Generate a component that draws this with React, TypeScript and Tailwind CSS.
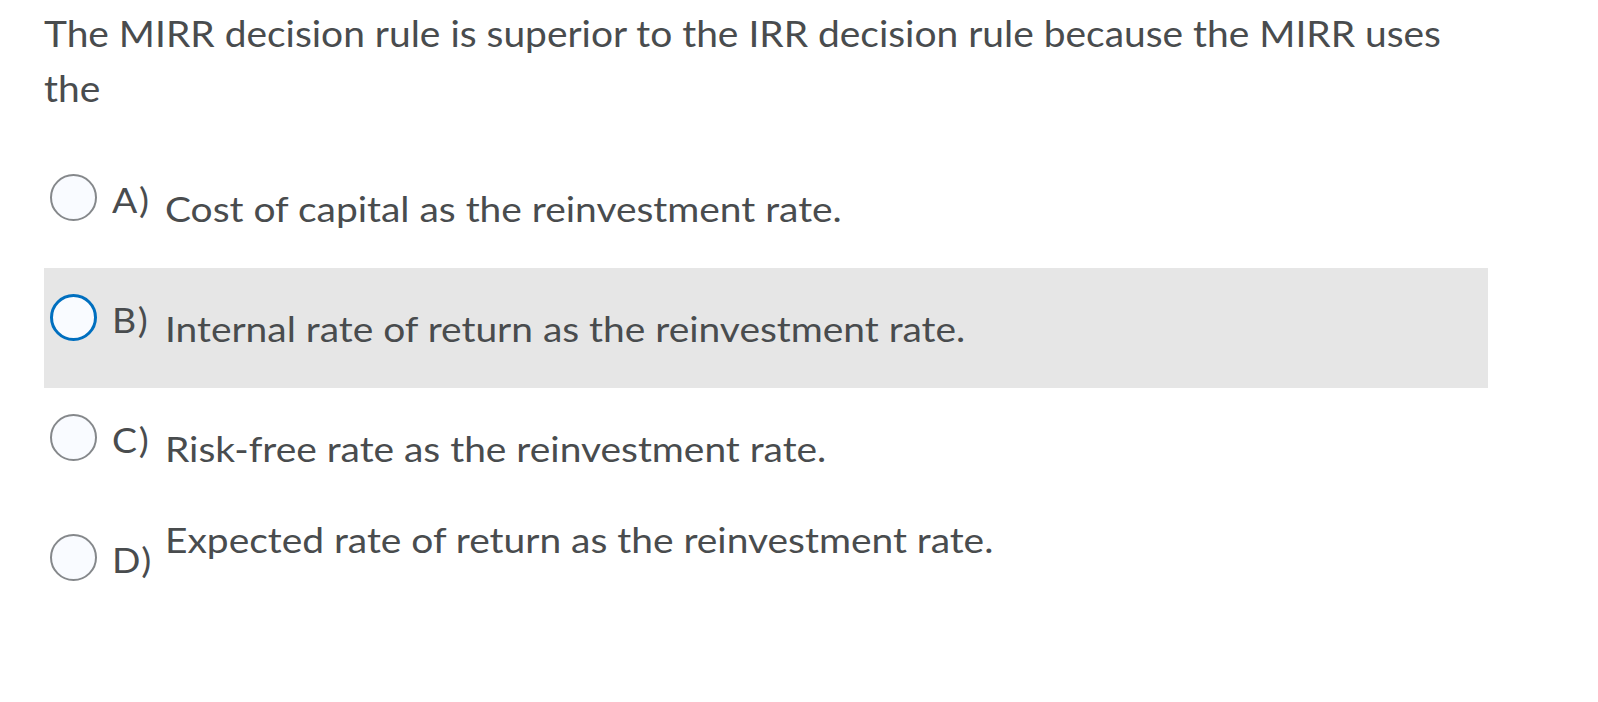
const choices = [
  { key: 'A)', text: 'Cost of capital as the reinvestment rate.', selected: false, textTop: false },
  { key: 'B)', text: 'Internal rate of return as the reinvestment rate.', selected: true, textTop: false },
  { key: 'C)', text: 'Risk-free rate as the reinvestment rate.', selected: false, textTop: false },
  { key: 'D)', text: 'Expected rate of return as the reinvestment rate.', selected: false, textTop: true },
]

function Radio({ selected }: { selected: boolean }) {
  return (
    <span
      className={`mt-[26px] ml-[6px] block h-[47px] w-[47px] shrink-0 rounded-full bg-[#f9fbff] ${
        selected ? 'border-[3px] border-[#006fbf]' : 'border-2 border-[#85888b]'
      }`}
    />
  )
}

export default function App() {
  return (
    <div className="min-h-[702px] w-full bg-white font-['Lato','Noto_Sans',sans-serif] text-[#494c4e]">
      <p className="pt-[6px] pl-[44px]">
        <span className="block w-[1320px] origin-left scale-x-[1.081] text-[36px] leading-[55px]">
          The MIRR decision rule is superior to the IRR decision rule because the MIRR uses the
        </span>
      </p>

      <div className="mt-[32px] w-[1488px] pl-[44px]">
        {choices.map((c) => (
          <div key={c.key} className={`flex h-[120px] items-start ${c.selected ? 'bg-[#e6e6e6]' : ''}`}>
            <Radio selected={c.selected} />
            <span className="mt-[35px] ml-[15px] w-[53px] shrink-0">
              <span className="block origin-left scale-x-[1.1] text-[34px] leading-none tracking-[1.5px]">
                {c.key}
              </span>
            </span>
            <span
              className={`${c.textTop ? 'mt-[14px]' : 'mt-[43px]'} block origin-left scale-x-[1.112] text-[35px] leading-none`}
            >
              {c.text}
            </span>
          </div>
        ))}
      </div>
    </div>
  )
}
